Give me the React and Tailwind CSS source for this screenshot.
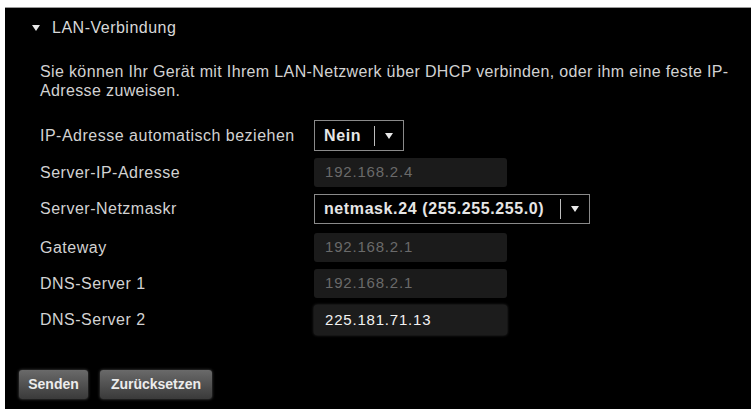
import React from "react";

const font = { fontFamily: '"Liberation Sans", Arial, sans-serif' };

const Caret = () => (
  <svg width="8" height="6" viewBox="0 0 8 6" className="shrink-0">
    <path d="M0 0 L8 0 L4 6 Z" fill="#e8e8e8" />
  </svg>
);

const Select = ({ value, width }) => (
  <div
    className="flex items-center h-full border border-[#8a8a8a] bg-black"
    style={{ width }}
  >
    <span className="pl-[9px] text-[16px] font-bold text-[#e6e6e6] tracking-[0.6px] whitespace-nowrap">
      {value}
    </span>
    <span className="ml-auto mr-[10px] h-[20px] w-px bg-[#bdbdbd]" />
    <span className="mr-[10px]">
      <Caret />
    </span>
  </div>
);

const Input = ({ value, active }) => (
  <div
    className={
      "flex items-center h-full w-[193px] rounded-[3px] pl-[11px] text-[15px] tracking-[0.8px] " +
      (active
        ? "bg-[#1c1c1c] text-[#f2f2f2] shadow-[0_0_3px_rgba(120,120,120,0.5)]"
        : "bg-[#1b1b1b] text-[#6a6a6a]")
    }
  >
    {value}
  </div>
);

const Row = ({ label, h, mt, children }) => (
  <div className="flex items-center" style={{ height: h, marginTop: mt }}>
    <div className="w-[274px] text-[16px] text-[#d2d2d2] tracking-[0.5px] whitespace-nowrap">
      {label}
    </div>
    <div className="h-full flex">{children}</div>
  </div>
);

export default function App() {
  return (
    <div className="bg-white pt-[7px] pl-[5px] h-[409px] w-[751px] overflow-hidden" style={font}>
      <div className="bg-black h-full border-t border-[#9a9a9a] flex flex-col">
        <div className="flex items-center mt-[10px] h-[20px] pl-[27px]">
          <Caret />
          <span className="ml-[12px] text-[16px] text-[#d8d8d8] tracking-[0.5px]">
            LAN-Verbindung
          </span>
        </div>

        <p className="mt-[24px] pl-[35px] pr-[10px] text-[16px] leading-[19px] text-[#d2d2d2] tracking-[0.36px]">
          Sie können Ihr Gerät mit Ihrem LAN-Netzwerk über DHCP verbinden, oder ihm eine feste IP-Adresse zuweisen.
        </p>

        <div className="pl-[35px] flex flex-col mt-[20px]">
          <Row label="IP-Adresse automatisch beziehen" h={31}>
            <Select value="Nein" width={90} />
          </Row>
          <Row label="Server-IP-Adresse" h={29} mt={7}>
            <Input value="192.168.2.4" />
          </Row>
          <Row label="Server-Netzmaskr" h={30} mt={7}>
            <Select value="netmask.24 (255.255.255.0)" width={276} />
          </Row>
          <Row label="Gateway" h={29} mt={9}>
            <Input value="192.168.2.1" />
          </Row>
          <Row label="DNS-Server 1" h={29} mt={7}>
            <Input value="192.168.2.1" />
          </Row>
          <Row label="DNS-Server 2" h={30} mt={7}>
            <Input value="225.181.71.13" active />
          </Row>
        </div>

        <div className="flex gap-[12px] pl-[14px] mt-[35px]">
          <button className="h-[29px] w-[69px] rounded-[3px] bg-gradient-to-b from-[#6a6a6a] to-[#3a3a3a] text-[14px] font-bold text-[#ececec] shadow-[0_0_3px_rgba(140,140,140,0.6)]">
            Senden
          </button>
          <button className="h-[29px] w-[112px] rounded-[3px] bg-gradient-to-b from-[#6a6a6a] to-[#3a3a3a] text-[14px] font-bold text-[#ececec] shadow-[0_0_3px_rgba(140,140,140,0.6)]">
            Zurücksetzen
          </button>
        </div>
      </div>
    </div>
  );
}
